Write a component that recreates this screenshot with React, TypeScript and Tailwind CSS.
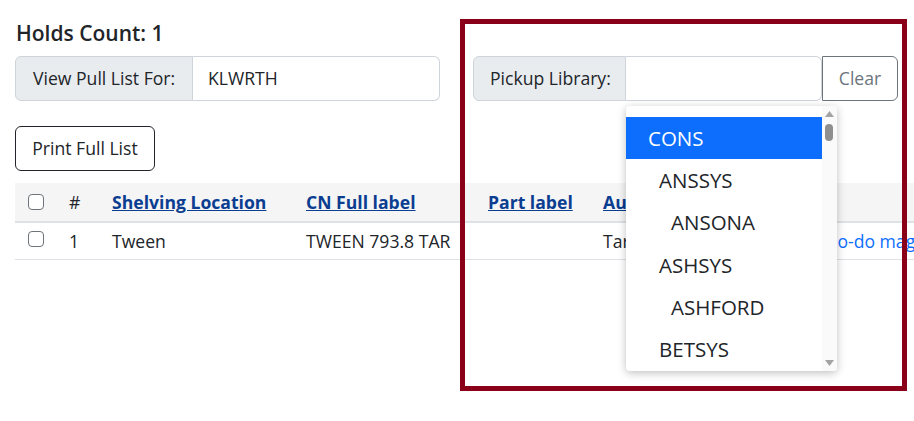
import React from 'react';

const OPTIONS: { label: string; indent: string; selected?: boolean }[] = [
  { label: 'CONS', indent: 'pl-[22px]', selected: true },
  { label: 'ANSSYS', indent: 'pl-[33px]' },
  { label: 'ANSONA', indent: 'pl-[45px]' },
  { label: 'ASHSYS', indent: 'pl-[33px]' },
  { label: 'ASHFORD', indent: 'pl-[45px]' },
  { label: 'BETSYS', indent: 'pl-[33px]' },
];

function Check() {
  return <span className="block w-4 h-4 rounded-[4px] border border-[#6f7479] bg-white" />;
}

export default function App() {
  return (
    <div
      className="relative w-[914px] h-[421px] overflow-hidden bg-white text-[#212529] text-[17.6px]"
      style={{ fontFamily: '"Open Sans", "Noto Sans", sans-serif' }}
    >
      <div className="pl-[15px] pt-[21px]">
        <h4 className="text-[21px] leading-[24px] font-semibold ml-px">Holds Count: 1</h4>

        <div className="mt-[11px] flex items-start">
          {/* pull list for */}
          <div className="flex h-[45px] w-[425px]">
            <span className="flex items-center w-[178px] pl-[17px] bg-[#e9ecef] border border-[#ced4da] rounded-l-[6px]">
              View Pull List For:
            </span>
            <span className="flex items-center flex-1 pl-[15px] border border-l-0 border-[#ced4da] rounded-r-[6px]">
              KLWRTH
            </span>
          </div>

          {/* pickup library */}
          <div className="flex h-[45px] ml-[33px] w-[425px]">
            <span className="flex items-center w-[153px] pl-[16px] bg-[#e9ecef] border border-[#ced4da] rounded-l-[6px]">
              Pickup Library:
            </span>
            <span className="flex-1 border border-l-0 border-[#ced4da] rounded-r-[6px]" />
            <span className="flex items-center justify-center w-[76px] border border-[#6c757d] rounded-r-[6px] text-[#6c757d]">
              Clear
            </span>
          </div>
        </div>

        <button className="mt-[25px] h-[45px] w-[140px] border border-[#212529] rounded-[6px] bg-white">
          Print Full List
        </button>

        <table className="mt-[12px] w-[1100px] table-fixed border-collapse text-left">
          <thead>
            <tr className="bg-[#f5f5f5] h-[39px] border-b-2 border-[#dee2e6]">
              <th className="w-[46px] pl-[13px]"><Check /></th>
              <th className="w-[43px] pl-[8px] font-normal">#</th>
              <th className="w-[194px] pl-[8px]"><a className="text-[#0b3d91] underline font-bold">Shelving Location</a></th>
              <th className="w-[182px] pl-[8px]"><a className="text-[#0b3d91] underline font-bold">CN Full label</a></th>
              <th className="w-[115px] pl-[8px]"><a className="text-[#0b3d91] underline font-bold">Part label</a></th>
              <th className="w-[192px] pl-[8px]"><a className="text-[#0b3d91] underline font-bold">Author</a></th>
              <th className="pl-[8px]"><a className="text-[#0b3d91] underline font-bold">Title</a></th>
            </tr>
          </thead>
          <tbody>
            <tr className="h-[37px] border-b border-[#dee2e6]">
              <td className="pl-[13px] align-top pt-[8px]"><Check /></td>
              <td className="pl-[8px]">1</td>
              <td className="pl-[8px]">Tween</td>
              <td className="pl-[8px] whitespace-nowrap">TWEEN 793.8 TAR</td>
              <td className="pl-[8px]" />
              <td className="pl-[8px] whitespace-nowrap">Tarr, Kristen</td>
              <td className="pl-[8px] whitespace-nowrap"><a className="text-[#0d6efd]">Voodo-do magic</a></td>
            </tr>
          </tbody>
        </table>
      </div>

      {/* open select list */}
      <div className="absolute left-[626px] top-[106px] w-[211px] h-[265px] bg-white rounded-[4px] shadow-[0_2px_8px_rgba(0,0,0,0.25)] flex overflow-hidden">
        <ul className="flex-1 pt-[11px] text-[20.5px]">
          {OPTIONS.map((o) => (
            <li
              key={o.label}
              className={
                'h-[42.3px] flex items-center ' +
                o.indent +
                (o.selected ? ' bg-[#0d6efd] text-white' : ' text-[#212529]')
              }
            >
              {o.label}
            </li>
          ))}
        </ul>
        <div className="w-[15px] bg-[#fafafa] relative">
          <svg className="absolute left-[3px] top-[5px]" width="9" height="6" viewBox="0 0 9 6">
            <path d="M4.5 0 L9 6 L0 6 Z" fill="#a3a3a3" />
          </svg>
          <span className="absolute left-[3px] top-[18px] w-[8px] h-[17px] rounded-full bg-[#8f8f8f]" />
          <svg className="absolute left-[3px] bottom-[5px]" width="9" height="6" viewBox="0 0 9 6">
            <path d="M0 0 L9 0 L4.5 6 Z" fill="#a3a3a3" />
          </svg>
        </div>
      </div>

      {/* highlight frame */}
      <div className="absolute left-[460px] top-[19px] w-[447px] h-[372px] border-[5px] border-[#8b0019] pointer-events-none" />
    </div>
  );
}
